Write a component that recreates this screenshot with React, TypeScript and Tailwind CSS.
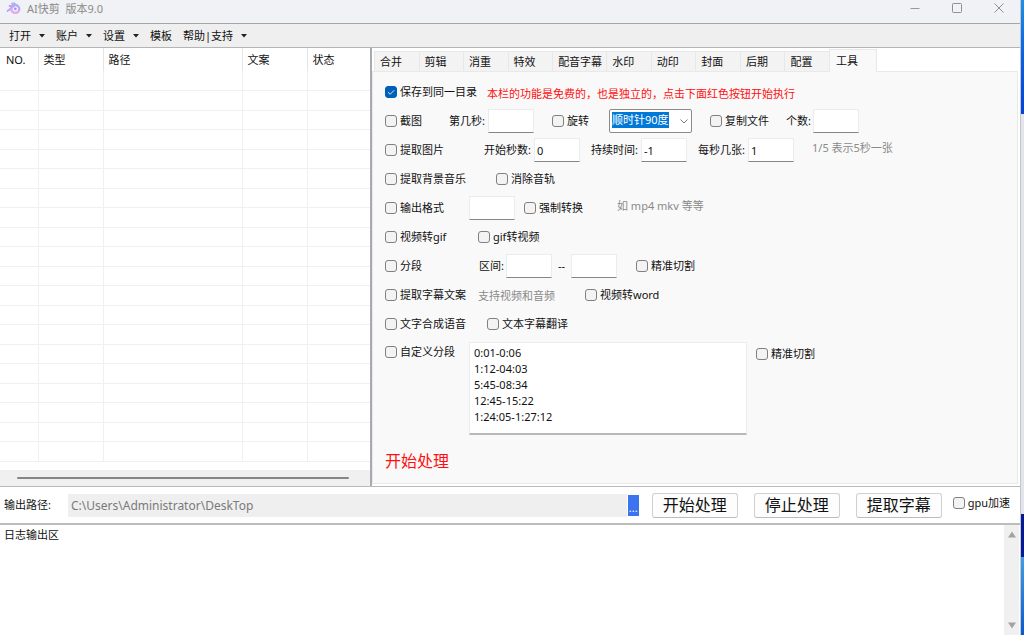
import { useState } from 'react';
import type { ReactNode } from 'react';

const MENUS = [
  { name: '打开', arrow: true },
  { name: '账户', arrow: true },
  { name: '设置', arrow: true },
  { name: '模板', arrow: false },
  { name: '帮助|支持', arrow: true },
];

const TABS = ['合并', '剪辑', '消重', '特效', '配音字幕', '水印', '动印', '封面', '后期', '配置'];

const SEGMENTS = ['0:01-0:06', '1:12-04:03', '5:45-08:34', '12:45-15:22', '1:24:05-1:27:12'].join('\n');

interface CheckProps {
  label: string;
  className?: string;
  checked?: boolean;
}

function Check({ label, className = '', checked = false }: CheckProps) {
  return (
    <label className={`flex shrink-0 items-center gap-[3px] whitespace-nowrap ${className}`}>
      <span className="relative flex h-3 w-3">
        <input
          type="checkbox"
          defaultChecked={checked}
          className="peer h-3 w-3 appearance-none rounded-[3px] border border-[#808080] bg-[#f3f3f3] checked:border-[#005fb8] checked:bg-[#005fb8]"
        />
        <svg
          viewBox="0 0 12 12"
          className="pointer-events-none absolute inset-0 hidden h-3 w-3 peer-checked:block"
          fill="none"
          stroke="#d5e6f8"
          strokeWidth="1"
        >
          <path d="M3 6.2 5.2 8.3 9.2 4.2" />
        </svg>
      </span>
      {label}
    </label>
  );
}

interface FieldProps {
  label: string;
  labelClass?: string;
  className?: string;
  value?: string;
}

function Field({ label, labelClass = '', className = '', value = '' }: FieldProps) {
  return (
    <label className={`flex shrink-0 items-center whitespace-nowrap ${className}`}>
      <span className={labelClass}>{label}</span>
      <TextBox value={value} />
    </label>
  );
}

function TextBox({ value = '', label }: { value?: string; label?: string }) {
  return (
    <input
      type="text"
      aria-label={label}
      defaultValue={value}
      className="h-6 w-[46px] shrink-0 border border-[#ececec] border-b-[#868686] bg-white px-[2px]"
    />
  );
}

function Row({ children }: { children: ReactNode }) {
  return <div className="flex items-center">{children}</div>;
}

function Logo() {
  return (
    <svg viewBox="0 0 16 16" className="h-4 w-4" fill="none" strokeLinecap="round">
      <path d="M1.5 11 8 6H3.5M8 6 6 3.5" stroke="#b9a4f6" strokeWidth="1.8" />
      <circle cx="9.3" cy="9" r="4" stroke="#c4a4f6" strokeWidth="2.2" />
      <path d="M5.3 9.6A4 4 0 0 0 12.6 11" stroke="#eaa8f0" strokeWidth="2.2" />
      <path d="M8 3.2 13 7.4" stroke="#a9b0fa" strokeWidth="1.8" />
      <circle cx="9.3" cy="8.8" r="1.4" fill="#8f9cf8" />
    </svg>
  );
}

function TitleBar() {
  return (
    <header className="flex h-6 items-start border-b border-[#a6a6a6] bg-[#f0f2f5] pl-[6px] text-[#8b8b8b]">
      <Logo />
      <h1 className="ml-[5px] whitespace-pre leading-[18px]">AI快剪  版本9.0</h1>
      <div className="ml-auto flex h-4 items-center">
        <button aria-label="最小化" className="flex h-4 w-[42px] items-center justify-center">
          <svg viewBox="0 0 10 10" className="h-[10px] w-[10px]" stroke="#999" fill="none">
            <path d="M0.5 5.5h9" />
          </svg>
        </button>
        <button aria-label="最大化" className="flex h-4 w-[42px] items-center justify-center">
          <svg viewBox="0 0 10 10" className="h-[10px] w-[10px]" stroke="#909090" fill="none">
            <rect x="0.5" y="0.5" width="9" height="9" rx="0.8" />
          </svg>
        </button>
        <button aria-label="关闭" className="flex h-4 w-[42px] items-center justify-center">
          <svg viewBox="0 0 10 10" className="h-[10px] w-[10px]" stroke="#909090" fill="none">
            <path d="M0.5 0.5 9.5 9.5M9.5 0.5 0.5 9.5" />
          </svg>
        </button>
      </div>
    </header>
  );
}

function MenuBar() {
  return (
    <nav className="flex h-6 items-center gap-[11px] border-b border-[#b4b4b4] bg-[#efefef] pl-[9px]">
      {MENUS.map((menu) => (
        <button key={menu.name} className="flex items-center gap-2 whitespace-nowrap">
          {menu.name}
          {menu.arrow && (
            <svg viewBox="0 0 6 4" className="h-1 w-[6px]" fill="#222">
              <path d="M0 0h6L3 3.6z" />
            </svg>
          )}
        </button>
      ))}
    </nav>
  );
}

function FileList() {
  const rows = Array.from({ length: 20 });
  return (
    <section className="flex w-[372px] shrink-0 flex-col border-r-2 border-[#a9a9b0] bg-white">
      <div className="min-h-0 flex-1 overflow-hidden">
        <table className="w-full table-fixed border-collapse">
          <thead>
            <tr className="h-[23px] text-left">
              <th className="w-[38px] border-r border-[#e5e5e5] pl-[6px] font-normal">NO.</th>
              <th className="w-[65px] border-r border-[#e5e5e5] pl-[5px] font-normal">类型</th>
              <th className="w-[139px] border-r border-[#e5e5e5] pl-[5px] font-normal">路径</th>
              <th className="w-[65px] border-r border-[#e5e5e5] pl-[5px] font-normal">文案</th>
              <th className="pl-[5px] font-normal">状态</th>
            </tr>
          </thead>
          <tbody>
            {rows.map((_, index) => (
              <tr key={index} className="h-[19px] border-b border-[#f0f0f0] even:h-5">
                <td className="border-r border-[#f0f0f0] p-0" />
                <td className="border-r border-[#f0f0f0] p-0" />
                <td className="border-r border-[#f0f0f0] p-0" />
                <td className="border-r border-[#f0f0f0] p-0" />
                <td className="p-0" />
              </tr>
            ))}
          </tbody>
        </table>
      </div>
      {/* 横向滚动条 */}
      <div className="flex h-4 shrink-0 items-center bg-[#f0f0f0] pr-[21px] pl-[17px]">
        <div className="h-[2px] flex-1 rounded-full bg-[#868686]" />
      </div>
    </section>
  );
}

function ToolPanel() {
  return (
    <div className="flex-1 border border-[#e9e9e9] bg-[#f9f9f9] pt-[6px] pl-3">
      <div className="grid h-[260px] grid-rows-9">
        <Row>
          <Check label="保存到同一目录" className="w-[102px]" checked />
          <p className="pt-1 whitespace-nowrap text-[#ff1010]">
            本栏的功能是免费的，也是独立的，点击下面红色按钮开始执行
          </p>
        </Row>
        <Row>
          <Check label="截图" className="w-16" />
          <Field label="第几秒:" labelClass="w-[39px]" />
          <Check label="旋转" className="ml-[18px] w-[57px]" />
          <div className="relative h-6 w-[83px] shrink-0">
            <select
              aria-label="旋转方向"
              className="peer h-6 w-full appearance-none rounded-[2px] border border-[#8a8a8a] bg-white pl-1 text-transparent"
            >
              <option>顺时针90度</option>
              <option>逆时针90度</option>
            </select>
            <span className="pointer-events-none absolute top-[3px] left-[3px] h-4 bg-[#0078d7] leading-4 whitespace-nowrap text-white" aria-hidden="true">
              顺时针90度
            </span>
            <svg
              viewBox="0 0 8 5"
              className="pointer-events-none absolute top-[10px] right-1 h-[5px] w-2"
              fill="none"
              stroke="#777"
            >
              <path d="M0.5 0.5 4 4 7.5 0.5" />
            </svg>
          </div>
          <Check label="复制文件" className="ml-[18px] w-[76px]" />
          <Field label="个数:" labelClass="w-[27px]" />
        </Row>
        <Row>
          <Check label="提取图片" className="w-[99px]" />
          <Field label="开始秒数:" labelClass="w-[50px]" value="0" />
          <Field label="持续时间:" className="ml-[11px]" labelClass="w-[50px]" value="-1" />
          <Field label="每秒几张:" className="ml-[11px]" labelClass="w-[50px]" value="1" />
          <p className="ml-[18px] pb-1 whitespace-nowrap text-[#8a8a8a]">1/5 表示5秒一张</p>
        </Row>
        <Row>
          <Check label="提取背景音乐" className="w-[111px]" />
          <Check label="消除音轨" />
        </Row>
        <Row>
          <Check label="输出格式" className="w-[84px]" />
          <TextBox label="输出格式" />
          <Check label="强制转换" className="ml-[9px] w-[93px]" />
          <p className="pb-1 whitespace-nowrap text-[#8a8a8a]">如 mp4 mkv 等等</p>
        </Row>
        <Row>
          <Check label="视频转gif" className="w-[93px]" />
          <Check label="gif转视频" />
        </Row>
        <Row>
          <Check label="分段" className="w-[94px]" />
          <Field label="区间:" labelClass="w-[27px]" />
          <span className="w-[19px] text-center">--</span>
          <TextBox label="区间结束" />
          <Check label="精准切割" className="ml-[19px]" />
        </Row>
        <Row>
          <Check label="提取字幕文案" className="w-[93px]" />
          <p className="w-[107px] pt-[2px] whitespace-nowrap text-[#8a8a8a]">支持视频和音频</p>
          <Check label="视频转word" />
        </Row>
        <Row>
          <Check label="文字合成语音" className="w-[102px]" />
          <Check label="文本字幕翻译" />
        </Row>
      </div>
      <div className="flex items-start pt-1">
        <Check label="自定义分段" className="w-[84px] pt-[2px]" />
        <textarea
          aria-label="自定义分段"
          defaultValue={SEGMENTS}
          className="h-[93px] w-[278px] resize-none overflow-hidden border border-[#ececec] border-b-2 border-b-[#b8b8b8] bg-white px-1 py-[2px] leading-4"
        />
        <Check label="精准切割" className="ml-[9px] pt-1" />
      </div>
      <button className="mt-[14px] text-base leading-6 text-[#ff1010]">开始处理</button>
    </div>
  );
}

function Tabs() {
  const [active, setActive] = useState('工具');
  return (
    <section className="flex min-w-0 flex-1 flex-col bg-white pr-[2px] pb-[2px]">
      <div role="tablist" className="flex h-[23px] items-end pl-[2px]">
        <div className="flex h-5 w-[455px]">
          {TABS.map((tab) => (
            <button
              key={tab}
              role="tab"
              aria-selected={active === tab}
              onClick={() => setActive(tab)}
              className={`border-t border-l border-[#e8e8e8] bg-[#f3f3f3] pl-[5px] text-left whitespace-nowrap ${
                tab.length > 2 ? 'flex-5' : 'flex-4'
              }`}
            >
              {tab}
            </button>
          ))}
        </div>
        <button
          role="tab"
          aria-selected={active === '工具'}
          onClick={() => setActive('工具')}
          className="relative -mb-px h-[23px] w-12 border border-b-0 border-[#e8e8e8] bg-[#f9f9f9] pl-[6px] text-left"
        >
          工具
        </button>
      </div>
      <ToolPanel />
    </section>
  );
}

function OutputBar() {
  const buttons = ['开始处理', '停止处理', '提取字幕'];
  return (
    <section className="flex h-[38px] items-center border-b-2 border-[#bdbdbd] bg-white pr-[10px] pl-1">
      <label htmlFor="output-path" className="w-16 whitespace-nowrap">
        输出路径:
      </label>
      <input
        id="output-path"
        readOnly
        defaultValue="C:\Users\Administrator\DeskTop"
        className="h-[23px] min-w-0 flex-1 bg-[#efefef] px-[3px] text-xs text-[#7a7a7a]"
      />
      <button aria-label="选择路径" className="ml-px flex h-[21px] w-[11px] items-end justify-center bg-[#3b74ee] text-white">
        ...
      </button>
      <div className="ml-[13px] flex gap-4">
        {buttons.map((name) => (
          <button
            key={name}
            className="h-[25px] w-[86px] rounded-[3px] border border-[#d0d0d0] border-b-[#bcbcbc] bg-[#fdfdfd] text-base leading-5 whitespace-nowrap"
          >
            {name}
          </button>
        ))}
      </div>
      <Check label="gpu加速" className="ml-[11px] pb-1" />
    </section>
  );
}

function LogArea() {
  return (
    <section className="flex flex-1 bg-white">
      <textarea
        aria-label="日志"
        readOnly
        defaultValue="日志输出区"
        className="flex-1 resize-none overflow-hidden px-1 py-[2px] leading-4"
      />
      <div className="mr-px flex w-[15px] flex-col items-center justify-between bg-[#f0f0f0] py-[6px]">
        <svg viewBox="0 0 8 7" className="h-[7px] w-2" fill="#a3a3a3">
          <path d="M4 0.5 8 6.5H0z" />
        </svg>
        <svg viewBox="0 0 8 7" className="h-[7px] w-2" fill="#a3a3a3">
          <path d="M0 0.5h8L4 6.5z" />
        </svg>
      </div>
    </section>
  );
}

// 窗口右侧露出的桌面
function Desktop() {
  return (
    <div className="flex w-[3px] shrink-0 flex-col">
      <div className="h-[114px] bg-gradient-to-b from-[#1f8fe8] via-[#0a5fe6] to-[#0540e0]" />
      <div className="h-[400px] bg-[#e3e5ea]" />
      <div className="h-[43px] bg-[#04189a]" />
      <div className="flex-1 bg-gradient-to-b from-[#3f9fe6] to-[#0c57d2]" />
    </div>
  );
}

export default function App() {
  return (
    <div className="flex min-h-screen bg-white font-['Noto_Sans','Noto_Sans_CJK_SC',sans-serif] text-[11px] leading-4 text-[#111]">
      <div className="flex min-w-0 flex-1 flex-col border-r border-[#c4c6cf]">
        <TitleBar />
        <MenuBar />
        <main className="flex h-[439px] border-b border-[#b9b9c0]">
          <FileList />
          <Tabs />
        </main>
        <OutputBar />
        <LogArea />
      </div>
      <Desktop />
    </div>
  );
}
